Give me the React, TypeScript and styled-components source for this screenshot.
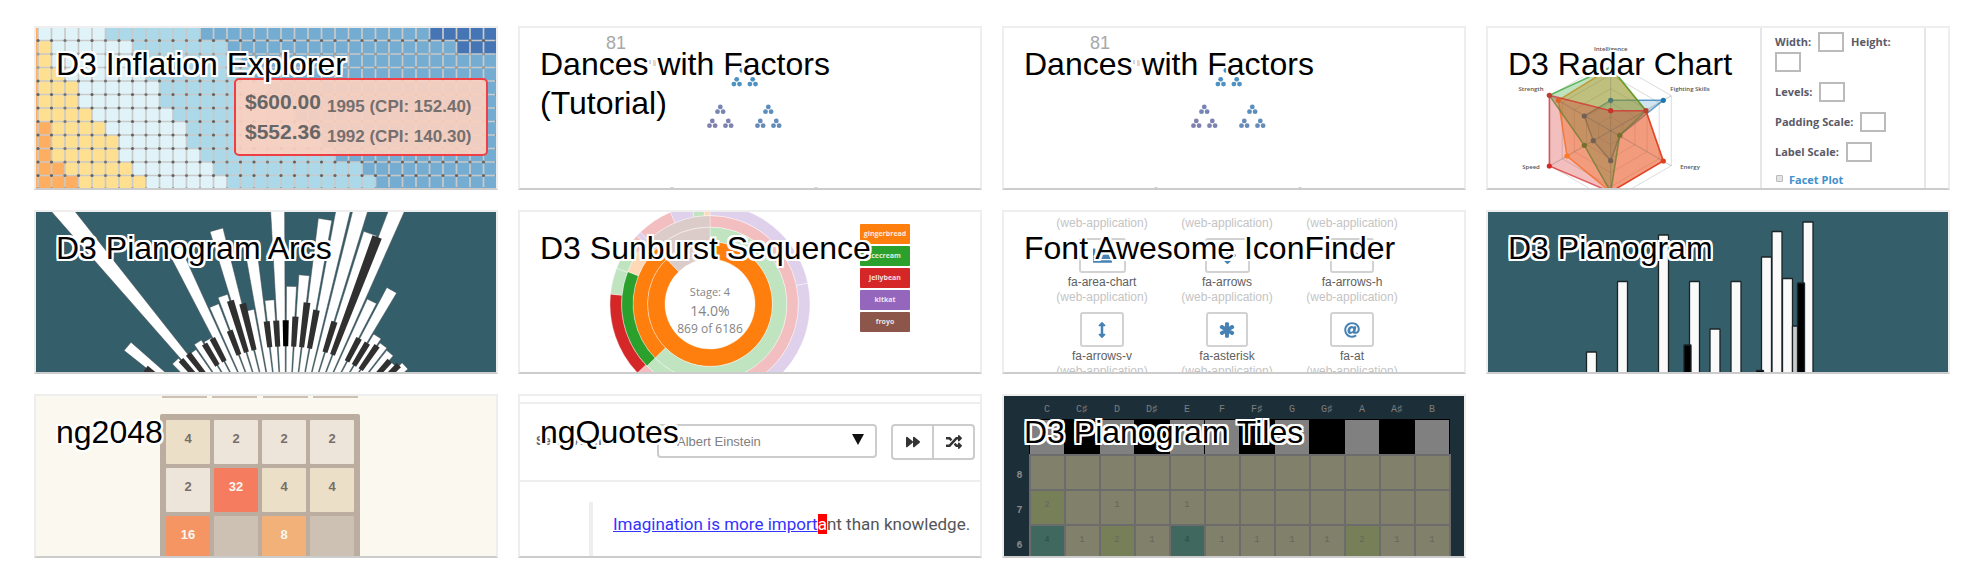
import React from 'react';
import styled, { createGlobalStyle } from 'styled-components';
import {
  FaArrowsAlt,
  FaArrowsAltH,
  FaArrowsAltV,
  FaAsterisk,
  FaAt,
  FaChartArea,
  FaForward,
  FaRandom,
} from 'react-icons/fa';

const sans = '"Liberation Sans", Arial, sans-serif';
const openSans = '"Open Sans", "Noto Sans", sans-serif';

const GlobalStyle = createGlobalStyle`
  *, *::before, *::after { box-sizing: border-box; }
  body { margin: 0; background: #fff; font-family: ${sans}; }
`;

/* ---------- page ---------- */

const Gallery = styled.main`
  display: grid;
  grid-template-columns: repeat(auto-fill, minmax(420px, 1fr));
  gap: 20px;
  padding: 26px 36px 30px 34px;
`;

const Card = styled.article`
  position: relative;
  border: 2px solid #eee;
  border-bottom-color: #ccc;
  overflow: hidden;
`;

const Thumb = styled.div<{ $bg?: string }>`
  position: relative;
  display: flex;
  justify-content: center;
  height: 160px;
  overflow: hidden;
  background: ${(p) => p.$bg ?? '#fff'};
`;

const Title = styled.h2`
  position: absolute;
  top: 0;
  left: 0;
  width: 100%;
  margin: 0;
  padding: 17px 20px;
  font-size: 32px;
  font-weight: 400;
  line-height: 39px;
  pointer-events: none;
`;

const TitleLink = styled.a`
  color: #000;
  text-decoration: none;
  pointer-events: auto;
  text-shadow: 2px 0 #fff, -2px 0 #fff, 0 2px #fff, 0 -2px #fff, 2px 2px #fff,
    -2px -2px #fff, 2px -2px #fff, -2px 2px #fff;
`;

const Art = styled.svg`
  display: block;
  width: 100%;
  height: 160px;
`;

const Drawing = ({ children }: { children: React.ReactNode }) => (
  <Art viewBox="0 0 460 160" preserveAspectRatio="xMidYMid slice" aria-hidden="true">
    {children}
  </Art>
);

/* ---------- inflation explorer ---------- */

const heatColors = ['#fdae61', '#fee090', '#e0f3f8', '#abd9e9', '#74add1', '#4575b4'];

// For every row: the column at which each colour band ends.
const heatRows = [
  [0, 0, 5, 12, 29, 35],
  [0, 1, 7, 14, 31, 35],
  [0, 1, 8, 15, 35, 35],
  [0, 2, 8, 16, 35, 35],
  [0, 3, 9, 17, 35, 35],
  [0, 3, 9, 18, 35, 35],
  [0, 4, 10, 19, 35, 35],
  [1, 5, 11, 20, 35, 35],
  [1, 6, 11, 21, 35, 35],
  [1, 6, 12, 22, 35, 35],
  [2, 7, 13, 24, 35, 35],
  [3, 8, 14, 25, 35, 35],
];
const CELL = 13.5;

const Tooltip = styled.dl`
  position: absolute;
  top: 50px;
  right: 8px;
  width: 254px;
  margin: 0;
  padding: 7px 9px;
  border: 2px solid #ee4044;
  border-radius: 5px;
  background: rgba(250, 208, 192, 0.93);
  color: #666;
`;

const TooltipRow = styled.div`
  display: flex;
  gap: 6px;
  height: 30px;
  line-height: 30px;
`;

const Price = styled.dt`
  font-size: 21px;
  font-weight: 700;
`;

const Index = styled.dd`
  margin: 0;
  padding-top: 5px;
  color: #757070;
  font-size: 17px;
  font-weight: 700;
`;

const Inflation = () => (
  <Thumb $bg="#dde">
    <Drawing>
      {heatRows.map((ends, r) =>
        ends.map((end, c) => {
          const start = c === 0 ? -1 : ends[c - 1];
          if (end <= start) return null;
          return (
            <rect
              key={`${r}-${c}`}
              x={2 + (start <= 0 ? -1 : start) * CELL + (start === 0 ? CELL : 0)}
              y={-1 + r * CELL}
              width={(end - start) * CELL + 1}
              height={CELL}
              fill={heatColors[c]}
            />
          );
        })
      )}
      {Array.from({ length: 35 }, (_, i) => (
        <line key={`v${i}`} x1={2 + i * CELL} x2={2 + i * CELL} y1={0} y2={160} stroke="#c9c9c9" strokeWidth={1.7} />
      ))}
      {Array.from({ length: 12 }, (_, i) => (
        <line key={`h${i}`} x1={0} x2={460} y1={12.5 + i * CELL} y2={12.5 + i * CELL} stroke="#c9c9c9" strokeWidth={1.7} />
      ))}
      {Array.from({ length: 12 }, (_, j) =>
        Array.from({ length: 35 }, (_, i) => (
          <circle
            key={`${i}-${j}`}
            cx={2 + i * CELL}
            cy={12.5 + j * CELL}
            r={1.6}
            fill="#4a4a4a"
            opacity={(j === 1 || j === 2 ? 0.35 : 0.8) - (i % 3 === 2 ? 0.15 : 0)}
          />
        ))
      )}
    </Drawing>
    <Tooltip>
      <TooltipRow>
        <Price>$600.00</Price>
        <Index>1995 (CPI: 152.40)</Index>
      </TooltipRow>
      <TooltipRow>
        <Price>$552.36</Price>
        <Index>1992 (CPI: 140.30)</Index>
      </TooltipRow>
    </Tooltip>
  </Thumb>
);

/* ---------- dances with factors ---------- */

const clusters: [number, number, string][] = [
  [224.7, 40, '#1f77b4'],
  [216.7, 53.7, '#2f7fb8'],
  [232.7, 53.7, '#2f7fb8'],
  [200.3, 81.3, '#5f70a8'],
  [192.3, 95.3, '#6a6ba2'],
  [208.3, 95.3, '#666da4'],
  [248.3, 81.3, '#3f7ab2'],
  [240.3, 95.3, '#4c76ae'],
  [256.3, 95.3, '#4878b0'],
];

const Factors = () => (
  <Thumb>
    <Drawing>
      <text x="86" y="21" fontFamily={sans} fontSize="18" fill="#a8a8a8">81</text>
      <rect x="129" y="32" width="2" height="4" fill="#c6d4ee" />
      <rect x="133" y="32" width="3" height="6" fill="#e8d6c0" />
      {clusters.map(([x, y, color]) => (
        <g key={`${x}-${y}`} fill={color} opacity="0.85">
          <circle cx={x} cy={y - 2.4} r="2.4" />
          <circle cx={x - 2.8} cy={y + 2.4} r="2.4" />
          <circle cx={x + 2.8} cy={y + 2.4} r="2.4" />
        </g>
      ))}
      <circle cx="152" cy="161.5" r="2.4" fill="#dcc0cc" />
      <circle cx="296" cy="161.5" r="2.4" fill="#dcc8c8" />
    </Drawing>
  </Thumb>
);

/* ---------- radar chart ---------- */

const RadarSvg = styled.svg`
  flex: 1 0 272px;
  height: 160px;
`;

const Panel = styled.form`
  flex: 0 0 166px;
  padding: 4px 12px 0 13px;
  border: solid #e6e6e6;
  border-width: 0 2px;
  color: #5a5a68;
  font: 700 11px/20px ${openSans};
`;

const Spacer = styled.div`
  flex: 0 0 22px;
`;

const FieldRow = styled.div`
  display: flex;
  flex-wrap: wrap;
  column-gap: 7px;
  margin-bottom: 10px;
`;

const Field = styled.label`
  display: contents;
`;

const FieldName = styled.span`
  white-space: nowrap;
`;

const NumberBox = styled.input`
  width: 26px;
  height: 20px;
  padding: 0;
  border: 2px solid #bbb;
  background: #fff;
`;

const Facet = styled.label`
  display: flex;
  align-items: center;
  gap: 6px;
  height: 16px;
  color: #4290cb;
`;

const Tick = styled.input`
  appearance: none;
  width: 7px;
  height: 7px;
  margin: 0 0 4px 1px;
  border: 1px solid #bbb;
  border-radius: 1px;
  background: #e4e4e4;
`;

const hexPoints = (r: number) =>
  [0, 60, 120, 180, 240, 300]
    .map((d) => {
      const a = (d * Math.PI) / 180;
      return `${(122.7 + r * Math.sin(a)).toFixed(1)},${(102.7 - r * Math.cos(a)).toFixed(1)}`;
    })
    .join(' ');

const radarShapes: { color: string; opacity: number; points: [number, number][] }[] = [
  { color: '#1f77b4', opacity: 0.2, points: [[122.7, 72.3], [96.3, 88], [105.3, 112.7], [122.7, 132.7], [131.7, 107.3], [175.3, 72.3]] },
  { color: '#ff7f0e', opacity: 0.38, points: [[122.7, 40], [70.3, 72.3], [79, 128], [122.7, 164], [175.3, 133], [158, 82.7]] },
  { color: '#2ca02c', opacity: 0.3, points: [[122.7, 39], [61.3, 67.3], [96.3, 117.3], [122.7, 164], [131.7, 107.3], [158, 82.7]] },
  { color: '#d62728', opacity: 0.3, points: [[122.7, 82.7], [61.3, 67.3], [61.3, 138], [122.7, 164], [175.3, 133], [158, 82.7]] },
];

const radarDots: [number, number, string][] = [
  [122.7, 72.3, '#527a72'], [175.3, 72.3, '#1f77b4'], [96.3, 88, '#726055'], [105.3, 112.7, '#726055'],
  [122.7, 132.7, '#726055'], [131.7, 107.3, '#72702a'], [96.3, 117.3, '#72702a'], [70.3, 72.3, '#e0622a'],
  [79, 128, '#ff7a20'], [61.3, 67.3, '#b8402c'], [61.3, 138, '#d62728'], [122.7, 82.7, '#c8342c'],
  [158, 82.7, '#b8402c'], [175.3, 133, '#e03c20'],
];

const RadarLabel = ({ x, y, children }: { x: number; y: number; children: string }) => (
  <text x={x} y={y} textAnchor="middle" fontFamily={openSans} fontSize="6" fontWeight="600" fill="#555">
    {children}
  </text>
);

const Radar = () => (
  <Thumb>
    <RadarSvg viewBox="0 0 272 160" aria-hidden="true">
      {[14, 28, 42, 56, 70].map((r) => (
        <polygon key={r} points={hexPoints(r)} fill="none" stroke="#dcdcdc" />
      ))}
      {radarShapes.map((s) => (
        <polygon
          key={s.color}
          points={s.points.map((p) => p.join(',')).join(' ')}
          fill={s.color}
          fillOpacity={s.opacity}
          stroke={s.color}
          strokeOpacity="0.7"
          strokeWidth="1.5"
        />
      ))}
      {[0, 60, 120, 180, 240, 300].map((d) => (
        <line key={d} x1="122.7" y1="102.7" x2="122.7" y2="32.7" stroke="#555" strokeOpacity="0.25" transform={`rotate(${d} 122.7 102.7)`} />
      ))}
      {radarDots.map(([x, y, c]) => (
        <circle key={`${x}-${y}`} cx={x} cy={y} r="2.6" fill={c} />
      ))}
      <RadarLabel x={122.7} y={23}>Intelligence</RadarLabel>
      <RadarLabel x={43} y={63}>Strength</RadarLabel>
      <RadarLabel x={202} y={63}>Fighting Skills</RadarLabel>
      <RadarLabel x={43} y={141}>Speed</RadarLabel>
      <RadarLabel x={202} y={141}>Energy</RadarLabel>
    </RadarSvg>
    <Panel>
      <FieldRow>
        <Field><FieldName>Width:</FieldName><NumberBox /></Field>
        <Field><FieldName>Height:</FieldName><NumberBox /></Field>
      </FieldRow>
      {['Levels:', 'Padding Scale:', 'Label Scale:'].map((name) => (
        <FieldRow key={name}>
          <Field><FieldName>{name}</FieldName><NumberBox /></Field>
        </FieldRow>
      ))}
      <Facet><Tick type="checkbox" />Facet Plot</Facet>
    </Panel>
    <Spacer />
  </Thumb>
);

/* ---------- pianogram arcs ---------- */

const TEAL = '#355e6b';
const STEP = 3.46;
const ORIGIN = { x: 249.7, y: 266.3 };

const whiteKeys: [number, number][] = [
  [-15, 206], [-14, 143], [-13, 161], [-12, 400], [-11, 157], [-10, 162], [-9, 159], [-8, 255],
  [-7, 187], [-6, 193], [-5, 258], [-4, 172], [-3, 237], [-2, 179], [-1, 350], [0, 192], [1, 204],
  [2, 262], [3, 333], [4, 333], [5, 259], [6, 333], [7, 197], [8, 216], [9, 169], [10, 165],
  [11, 163], [12, 157], [13, 164], [14, 143],
];
const blackKeys: [number, number][] = [
  [-15, 178], [-12, 158], [-11, 158], [-9, 157], [-8, 158], [-6, 158], [-5, 186], [-4, 180],
  [-2, 158], [-1, 158], [0, 158], [1, 162], [2, 177], [3, 171], [5, 164], [6, 258], [8, 158],
  [9, 158], [10, 161], [12, 157], [13, 160],
];

const wedge = (deg: number, half: number, r0: number, r1: number) => {
  const at = (d: number, r: number) => {
    const a = (d * Math.PI) / 180;
    return `${(ORIGIN.x + r * Math.sin(a)).toFixed(2)},${(ORIGIN.y - r * Math.cos(a)).toFixed(2)}`;
  };
  return [at(deg - half, r0), at(deg - half, r1), at(deg + half, r1), at(deg + half, r0)].join(' ');
};

const Arcs = () => (
  <Thumb $bg={TEAL}>
    <Drawing>
      {whiteKeys.map(([k, r]) => (
        <polygon key={k} points={wedge(STEP / 2 + STEP * k, 1.5, 60, r)} fill="#fff" stroke="#3c4a50" strokeWidth="0.5" />
      ))}
      {blackKeys.map(([k, r]) => (
        <polygon key={k} points={wedge(STEP * k, 1.1, 132, r)} fill={k === 0 ? '#000' : '#303030'} />
      ))}
    </Drawing>
  </Thumb>
);

/* ---------- sunburst ---------- */

const arc = (a0: number, a1: number, r0: number, r1: number) => {
  const pt = (d: number, r: number) => {
    const a = (d * Math.PI) / 180;
    return `${(190 + r * Math.sin(a)).toFixed(2)} ${(92 - r * Math.cos(a)).toFixed(2)}`;
  };
  const big = a1 - a0 > 180 ? 1 : 0;
  return `M${pt(a0, r1)}A${r1} ${r1} 0 ${big} 1 ${pt(a1, r1)}L${pt(a1, r0)}A${r0} ${r0} 0 ${big} 0 ${pt(a0, r0)}Z`;
};

const paleGreen = '#c0e3c0';
const palePink = '#f3bec0';
const paleLilac = '#dfd1ec';
const paleBrown = '#dcccc9';

const slices: [number, number, number, number, string][] = [
  [0, 316, 45, 62.5, '#ff7f0e'],
  [316, 360, 45, 62.5, paleBrown],
  [0, 225.5, 62.5, 77, paleGreen],
  [225.5, 316, 62.5, 77, '#ff7f0e'],
  [316, 360, 62.5, 77, paleBrown],
  [0, 155, 77, 88.5, palePink],
  [155, 225.5, 77, 88.5, paleGreen],
  [225.5, 291.5, 77, 88.5, '#2ca02c'],
  [291.5, 308, 77, 88.5, '#ffd8b6'],
  [308, 316, 77, 88.5, palePink],
  [316, 360, 77, 88.5, paleBrown],
  [0, 78, 88.5, 100, paleLilac],
  [78, 160, 88.5, 100, paleLilac],
  [160, 226.5, 88.5, 100, palePink],
  [226.5, 275.7, 88.5, 100, '#d62728'],
  [275.7, 291, 88.5, 100, paleGreen],
  [291, 305, 88.5, 100, paleGreen],
  [305, 313, 88.5, 100, palePink],
  [313, 316, 88.5, 100, paleLilac],
  [316, 336.7, 88.5, 100, palePink],
  [336.7, 349.6, 88.5, 100, paleLilac],
  [349.6, 356.4, 88.5, 100, paleGreen],
  [356.4, 360, 88.5, 100, '#ffd8b6'],
];

const SunburstSvg = styled.svg`
  flex: 1 0 340px;
  height: 160px;
`;

const Legend = styled.ul`
  display: flex;
  flex: 0 0 120px;
  flex-direction: column;
  align-items: flex-start;
  gap: 2px;
  margin: 0;
  padding: 12px 0 0;
  list-style: none;
`;

const LegendItem = styled.li<{ $color: string }>`
  width: 50px;
  border-radius: 1px;
  background: ${(p) => p.$color};
  color: rgba(255, 255, 255, 0.85);
  font: 700 7px/20px ${openSans};
  text-align: center;
`;

const legend = [
  ['gingerbread', '#ff7f0e'],
  ['icecream', '#2ca02c'],
  ['jellybean', '#d62728'],
  ['kitkat', '#9467bd'],
  ['froyo', '#8c564b'],
];

const Sunburst = () => (
  <Thumb>
    <SunburstSvg viewBox="0 0 340 160" aria-hidden="true">
      {slices.map(([a0, a1, r0, r1, color]) => (
        <path key={`${a0}-${r0}`} d={arc(a0, a1, r0, r1)} fill={color} stroke="#fff" strokeWidth="0.7" strokeOpacity="0.5" />
      ))}
      <g fontFamily={openSans} textAnchor="middle" fill="#858585">
        <text x="190" y="84" fontSize="11">Stage: 4</text>
        <text x="190" y="104" fontSize="14">14.0%</text>
        <text x="190" y="121" fontSize="12">869 of 6186</text>
      </g>
    </SunburstSvg>
    <Legend>
      {legend.map(([name, color]) => (
        <LegendItem key={name} $color={color}>{name}</LegendItem>
      ))}
    </Legend>
  </Thumb>
);

/* ---------- icon finder ---------- */

const IconGrid = styled.div`
  display: grid;
  flex: 0 0 375px;
  grid-template-columns: repeat(3, 1fr);
  grid-auto-rows: max-content;
  row-gap: 9px;
  margin-right: 14px;
  padding-top: 5px;
`;

const IconCell = styled.figure`
  display: flex;
  flex-direction: column;
  align-items: center;
  margin: 0;
`;

const IconBox = styled.span`
  display: flex;
  align-items: center;
  height: 35px;
  padding: 0 12px;
  border: 2px solid #d2d2d2;
  border-radius: 3px;
  color: #4682b4;
  font-size: 16px;
`;

const IconName = styled.figcaption`
  color: #606060;
  font-size: 12px;
  line-height: 18px;
`;

const Category = styled.small`
  color: #c4c4c4;
  font-size: 12px;
  line-height: 12px;
  text-align: center;
`;

const icons: [string, React.ReactNode][] = [
  ['fa-area-chart', <FaChartArea size={19} />],
  ['fa-arrows', <FaArrowsAlt size={17} />],
  ['fa-arrows-h', <FaArrowsAltH />],
  ['fa-arrows-v', <FaArrowsAltV width={8} height={17} />],
  ['fa-asterisk', <FaAsterisk size={14} stroke="currentColor" strokeWidth={60} overflow="visible" />],
  ['fa-at', <FaAt />],
];

const IconFinder = () => (
  <Thumb>
    <IconGrid>
      <Category>(web-application)</Category>
      <Category>(web-application)</Category>
      <Category>(web-application)</Category>
      {icons.map(([name, icon]) => (
        <IconCell key={name}>
          <IconBox>{icon}</IconBox>
          <IconName>{name}</IconName>
          <Category>(web-application)</Category>
        </IconCell>
      ))}
    </IconGrid>
  </Thumb>
);

/* ---------- pianogram ---------- */

const bars: [number, number, number, string][] = [
  [98.5, 10, 140, '#fafafa'],
  [129.5, 10, 69.5, '#fafafa'],
  [170.5, 10, 23, '#fafafa'],
  [201.5, 10, 69.5, '#fafafa'],
  [222, 10, 117, '#fafafa'],
  [243, 10, 69.5, '#fafafa'],
  [273.5, 10, 45, '#fafafa'],
  [284, 10, 19.5, '#fafafa'],
  [294.5, 10, 66.5, '#fafafa'],
  [304.5, 8, 114, '#ccc'],
  [315, 10, 10, '#fafafa'],
  [196, 7, 133, '#000'],
  [268.5, 7, 158.5, '#000'],
  [309.5, 7, 71, '#000'],
];

const Pianogram = () => (
  <Thumb $bg={TEAL}>
    <Drawing>
      {bars.map(([x, w, top, fill]) => (
        <rect key={`${x}`} x={x} y={top} width={w} height={180} rx="0.5" fill={fill} stroke="#1b2427" strokeWidth="1.3" />
      ))}
    </Drawing>
  </Thumb>
);

/* ---------- 2048 ---------- */

const Game = styled.div`
  display: flex;
  flex: 0 0 200px;
  flex-direction: column;
  gap: 16px;
  margin-right: 12px;
`;

const Scores = styled.div`
  display: flex;
  flex: 0 0 2px;
  justify-content: space-between;
  padding: 0 2px;
`;

const Score = styled.span`
  width: 45px;
  background: #cdc1b4;
`;

const Board = styled.div`
  display: grid;
  flex: none;
  grid-template-columns: repeat(4, 1fr);
  gap: 4px;
  padding: 6px;
  border-radius: 2px;
  background: #bbada0;
`;

const tileColors: Record<number, string> = {
  0: '#cdc1b4', 2: '#ede4da', 4: '#ebdfc8', 8: '#f2b179', 16: '#f59563', 32: '#f67c5f',
};

const Tile = styled.div<{ $n: number }>`
  height: 44px;
  border-radius: 1px;
  background: ${(p) => tileColors[p.$n]};
  color: ${(p) => (p.$n > 4 ? '#f9f6f2' : '#776e65')};
  font-size: 13px;
  font-weight: 700;
  line-height: 38px;
  text-align: center;
`;

const Game2048 = () => (
  <Thumb $bg="#faf8ef">
    <Game>
      <Scores><Score /><Score /><Score /><Score /></Scores>
      <Board>
        {[4, 2, 2, 2, 2, 32, 4, 4, 16, 0, 8, 0].map((n, i) => (
          <Tile key={i} $n={n}>{n || ''}</Tile>
        ))}
      </Board>
    </Game>
  </Thumb>
);

/* ---------- quotes ---------- */

const Quotes = styled.div`
  flex: 1 0 0;
  min-width: 0;
  padding-top: 6px;
`;

const Toolbar = styled.form`
  display: flex;
  align-items: flex-start;
  height: 80px;
  padding: 20px 5px 0 16px;
  border: solid #eee;
  border-width: 2px 0;
`;

const AuthorLabel = styled.label`
  flex: 1;
  color: #666;
  font-size: 12px;
  font-weight: 700;
  line-height: 34px;
`;

const SelectWrap = styled.span`
  position: relative;
  margin-right: 14px;

  &::after {
    content: '';
    position: absolute;
    top: 10px;
    right: 13px;
    border: 6px solid transparent;
    border-top: 11px solid #111;
    border-bottom: 0;
    pointer-events: none;
  }
`;

const AuthorSelect = styled.select`
  appearance: none;
  width: 220px;
  height: 34px;
  padding: 0 18px;
  border: 2px solid #ccc;
  border-radius: 4px;
  background: #fff;
  color: #808080;
  font: 13px ${sans};
`;

const ToolButton = styled.button`
  display: flex;
  align-items: center;
  justify-content: center;
  width: 43px;
  height: 36px;
  padding: 0;
  border: 2px solid #ccc;
  border-radius: 4px 0 0 4px;
  background: #fff;
  color: #333;
  font-size: 16px;

  & + & {
    margin-left: -2px;
    border-radius: 0 4px 4px 0;
  }
`;

const Quote = styled.blockquote`
  height: 60px;
  margin: 20px 0 0 69px;
  padding: 11px 0 0 20px;
  border-left: 4px solid #eee;
  color: #555;
  font: 17px/22px Roboto, ${sans};
  white-space: nowrap;
`;

const Typed = styled.span`
  color: #33f;
  text-decoration: underline;
`;

const Cursor = styled.span`
  background: #f00;
  color: #fff;
`;

const QuotesApp = () => (
  <Thumb>
    <Quotes>
      <Toolbar>
        <AuthorLabel htmlFor="author">Select Author:</AuthorLabel>
        <SelectWrap>
          <AuthorSelect id="author"><option>Albert Einstein</option></AuthorSelect>
        </SelectWrap>
        <ToolButton type="button" aria-label="Next"><FaForward size={14} /></ToolButton>
        <ToolButton type="button" aria-label="Shuffle"><FaRandom /></ToolButton>
      </Toolbar>
      <Quote>
        <Typed>Imagination is more import</Typed><Cursor>a</Cursor>nt than knowledge.
      </Quote>
    </Quotes>
  </Thumb>
);

/* ---------- pianogram tiles ---------- */

const TileTable = styled.table`
  flex: 0 0 446px;
  width: 446px;
  height: 163px;
  margin-right: 14px;
  border-collapse: collapse;
  table-layout: fixed;
  font-family: "Liberation Mono", monospace;
`;

const NoteHead = styled.th`
  width: 35px;
  height: 23px;
  padding: 5px 0 0;
  color: #7c7c7c;
  font-size: 10px;
  font-weight: 400;
  line-height: 18px;
`;

const Corner = styled(NoteHead)`
  width: 26px;
`;

const Octave = styled.th`
  height: 35px;
  padding: 6px 6px 0 0;
  color: #8a8a8a;
  font-size: 10px;
  text-align: right;
`;

const Key = styled.td<{ $black: boolean }>`
  height: 35px;
  padding: 0;
  border: 1px solid #000;
  background: ${(p) => (p.$black ? '#000' : '#808080')};
`;

const countColors: Record<number, string> = { 0: '#80806b', 1: '#80806b', 2: '#777f59', 4: '#40685f' };

const Count = styled.td<{ $n: number }>`
  height: 35px;
  padding: 0 0 5px;
  border: 2px solid #6c6c6c;
  background: ${(p) => countColors[p.$n]};
  color: ${(p) => (p.$n === 4 ? '#2c4d45' : '#66665a')};
  font-size: 9px;
  text-align: center;
`;

const notes = ['C', 'C♯', 'D', 'D♯', 'E', 'F', 'F♯', 'G', 'G♯', 'A', 'A♯', 'B'];
const octaves: [number, number[]][] = [
  [8, [0, 0, 0, 0, 0, 0, 0, 0, 0, 0, 0, 0]],
  [7, [2, 0, 1, 0, 1, 0, 0, 0, 0, 0, 0, 0]],
  [6, [4, 1, 2, 1, 4, 1, 1, 1, 1, 2, 1, 1]],
];

const PianoTiles = () => (
  <Thumb $bg="#1c2f38">
    <TileTable>
      <thead>
        <tr>
          <Corner />
          {notes.map((n) => <NoteHead key={n} scope="col">{n}</NoteHead>)}
        </tr>
      </thead>
      <tbody>
        <tr>
          <Octave />
          {notes.map((n) => <Key key={n} $black={n.length > 1} />)}
        </tr>
        {octaves.map(([octave, counts]) => (
          <tr key={octave}>
            <Octave scope="row">{octave}</Octave>
            {counts.map((n, i) => <Count key={i} $n={n}>{n || ''}</Count>)}
          </tr>
        ))}
      </tbody>
    </TileTable>
  </Thumb>
);

/* ---------- gallery ---------- */

const projects: [string, string, React.ComponentType][] = [
  ['D3 Inflation Explorer', 'inflation', Inflation],
  ['Dances with Factors (Tutorial)', 'factors-tutorial', Factors],
  ['Dances with Factors', 'factors', Factors],
  ['D3 Radar Chart', 'radar', Radar],
  ['D3 Pianogram Arcs', 'pianogram-arcs', Arcs],
  ['D3 Sunburst Sequence', 'sunburst', Sunburst],
  ['Font Awesome IconFinder', 'iconfinder', IconFinder],
  ['D3 Pianogram', 'pianogram', Pianogram],
  ['ng2048', 'ng2048', Game2048],
  ['ngQuotes', 'ngquotes', QuotesApp],
  ['D3 Pianogram Tiles', 'pianogram-tiles', PianoTiles],
];

export default function App() {
  return (
    <>
      <GlobalStyle />
      <Gallery>
        {projects.map(([title, slug, Preview]) => (
          <Card key={slug}>
            <Preview />
            <Title><TitleLink href={`#${slug}`}>{title}</TitleLink></Title>
          </Card>
        ))}
      </Gallery>
    </>
  );
}
